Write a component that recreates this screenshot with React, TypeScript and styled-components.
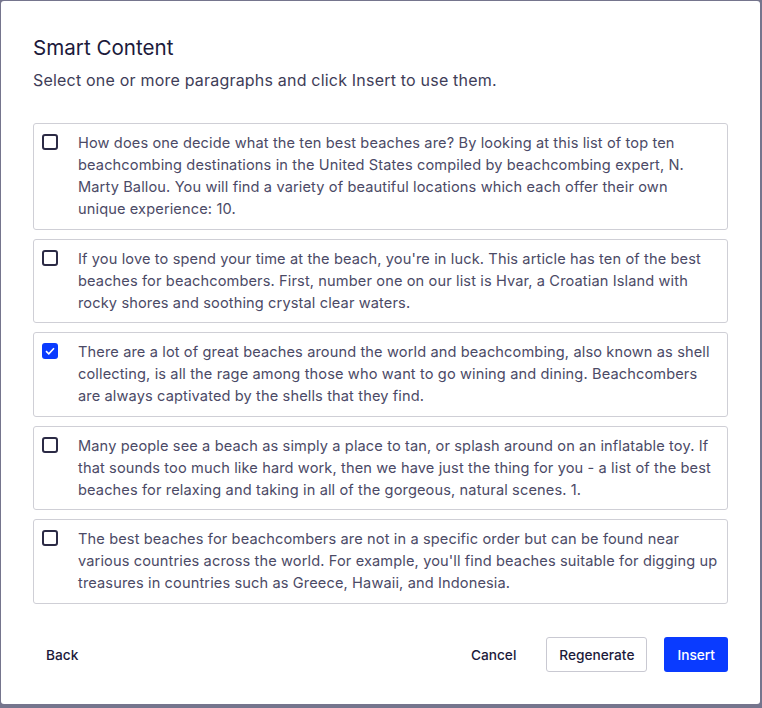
import React, { useState } from "react";
import styled, { createGlobalStyle } from "styled-components";

const Global = createGlobalStyle`
  html, body { margin: 0; padding: 0; }
  body {
    background: #75758d;
    font-family: Inter, "Noto Sans", sans-serif;
    width: 762px;
    height: 708px;
    overflow: hidden;
  }
`;

const Dialog = styled.div`
  box-sizing: border-box;
  margin: 1px 0 0 1px;
  width: 759px;
  height: 703px;
  background: #ffffff;
  border-radius: 3px;
  padding: 33px 32px 32px 32px;
  display: flex;
  flex-direction: column;
`;

const Title = styled.h2`
  margin: 0;
  font-size: 20.6px;
  line-height: 28px;
  font-weight: 400;
  color: #1c1a3b;
`;

const Subtitle = styled.p`
  margin: 7px 0 0 0;
  font-size: 16px;
  line-height: 22px;
  letter-spacing: 0.2px;
  color: #3e3d58;
`;

const List = styled.div`
  margin-top: 32px;
  display: flex;
  flex-direction: column;
  gap: 9px;
`;

const Card = styled.label`
  box-sizing: border-box;
  display: flex;
  align-items: flex-start;
  gap: 20px;
  padding: 8px 9.2px 8.5px 8px;
  border: 1px solid #cfcfd6;
  border-radius: 3px;
  cursor: pointer;
`;

const Box = styled.span<{ $checked: boolean }>`
  flex: none;
  box-sizing: border-box;
  width: 16px;
  height: 16px;
  margin-top: 2px;
  border-radius: 3px;
  border: ${(p) => (p.$checked ? "none" : "2px solid #2b2a45")};
  background: ${(p) => (p.$checked ? "#0a3bff" : "#fff")};
  display: flex;
  align-items: center;
  justify-content: center;
`;

const Text = styled.span`
  font-size: 14.6px;
  line-height: 22px;
  letter-spacing: 0.12px;
  color: #4b4a66;
`;

const Footer = styled.div`
  margin-top: auto;
  display: flex;
  align-items: center;
  gap: 17px;
`;

const Spacer = styled.div`
  flex: 1;
`;

const Button = styled.button<{ $variant: "ghost" | "outline" | "primary" }>`
  box-sizing: border-box;
  height: 35px;
  padding: 0 12px;
  font-family: Inter, "Noto Sans", sans-serif;
  font-size: 13.7px;
  font-weight: 500;
  border-radius: 3px;
  cursor: pointer;
  border: ${(p) => (p.$variant === "outline" ? "1px solid #c9c9d2" : "1px solid transparent")};
  background: ${(p) => (p.$variant === "primary" ? "#0a3bff" : "#fff")};
  color: ${(p) => (p.$variant === "primary" ? "#fff" : "#1c1a3b")};
`;

const paragraphs = [
  "How does one decide what the ten best beaches are? By looking at this list of top ten beachcombing destinations in the United States compiled by beachcombing expert, N. Marty Ballou. You will find a variety of beautiful locations which each offer their own unique experience: 10.",
  "If you love to spend your time at the beach, you're in luck. This article has ten of the best beaches for beachcombers. First, number one on our list is Hvar, a Croatian Island with rocky shores and soothing crystal clear waters.",
  "There are a lot of great beaches around the world and beachcombing, also known as shell collecting, is all the rage among those who want to go wining and dining. Beachcombers are always captivated by the shells that they find.",
  "Many people see a beach as simply a place to tan, or splash around on an inflatable toy. If that sounds too much like hard work, then we have just the thing for you - a list of the best beaches for relaxing and taking in all of the gorgeous, natural scenes. 1.",
  "The best beaches for beachcombers are not in a specific order but can be found near various countries across the world. For example, you'll find beaches suitable for digging up treasures in countries such as Greece, Hawaii, and Indonesia.",
];

export default function App() {
  const [checked, setChecked] = useState<boolean[]>([false, false, true, false, false]);
  return (
    <>
      <Global />
      <Dialog>
        <Title>Smart Content</Title>
        <Subtitle>Select one or more paragraphs and click Insert to use them.</Subtitle>
        <List>
          {paragraphs.map((t, i) => (
            <Card
              key={i}
              onClick={() => setChecked((c) => c.map((v, j) => (j === i ? !v : v)))}
            >
              <Box $checked={checked[i]}>
                {checked[i] && (
                  <svg width="10" height="8" viewBox="0 0 10 8">
                    <path d="M1 4.2 L3.8 6.8 L9 1.2" fill="none" stroke="#fff" strokeWidth="1.6" />
                  </svg>
                )}
              </Box>
              <Text>{t}</Text>
            </Card>
          ))}
        </List>
        <Footer>
          <Button $variant="ghost">Back</Button>
          <Spacer />
          <Button $variant="ghost">Cancel</Button>
          <Button $variant="outline">Regenerate</Button>
          <Button $variant="primary">Insert</Button>
        </Footer>
      </Dialog>
    </>
  );
}
